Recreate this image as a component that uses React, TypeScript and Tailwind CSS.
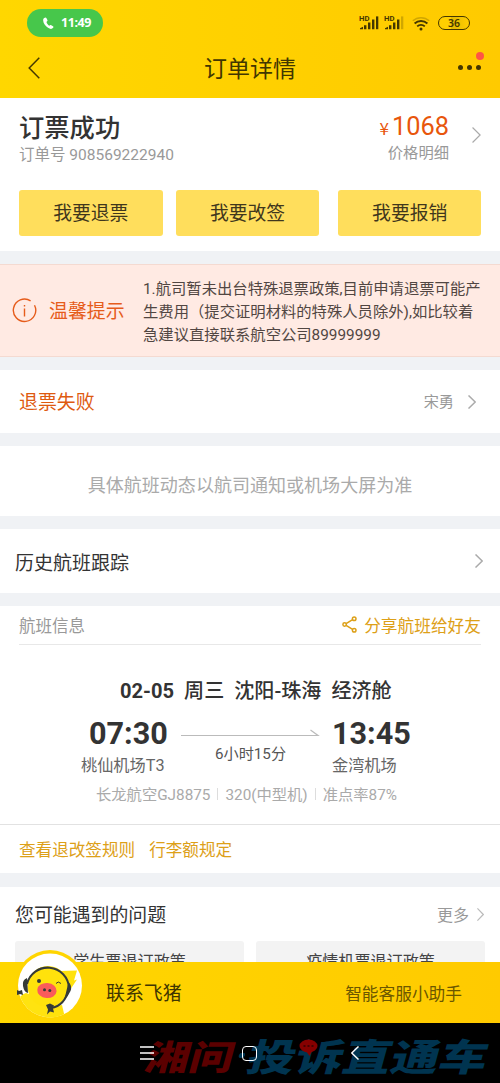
import React from "react";

function Chevron({ className, left = false, width = 1.2 }: { className: string; left?: boolean; width?: number }) {
  return (
    <svg className={className} viewBox="0 0 10 18" fill="none" stroke="currentColor" strokeWidth={width} preserveAspectRatio="none">
      <path d={left ? "M9.4 0.6L1 9l8.4 8.4" : "M0.6 0.6L9 9l-8.4 8.4"} vectorEffect="non-scaling-stroke" />
    </svg>
  );
}

function Signal({ faded = false }: { faded?: boolean }) {
  return (
    <svg className="h-[16px] w-[21px] shrink-0" viewBox="0 0 21 16">
      <text x="0" y="5.6" fontSize="6.8" fontWeight="700" fontFamily="Roboto, sans-serif" textLength="10.5" lengthAdjust="spacingAndGlyphs" fill="#443600">HD</text>
      <path d="M1 14.2v-1l3-1.400v2.400zM5 14.200v-4h2.400v4zM9 14.200V7.600h2.400v6.600zM13 14.200V4.600h2.400v9.600z" fill="#443600" />
      <path d="M17 14.200V1.400h2.300v12.800z" fill="#443600" opacity={faded ? 0.25 : 1} />
    </svg>
  );
}

function StatusBar() {
  return (
    <div className="flex h-[46px] items-center justify-between pl-[27px] pr-[30px]">
      <div className="flex h-[28px] w-[76px] items-center rounded-full bg-[#47c74b] pl-[16px] text-white">
        <svg className="h-[13px] w-[11px]" viewBox="0 0 11 13" fill="currentColor">
          <path d="M1.2 1.1C2.2.3 3 .3 3.500 1.200l.9 1.900c.3.700 0 1.100-.9 1.900.4 1.600 1.300 2.800 2.700 3.700.9-.8 1.400-.9 2-.5l1.800 1.100c.7.500.6 1.100-.1 1.800-1.100 1.200-2.900 1.100-4.900-.3C2.200 8.900.4 6.300.2 3.700.100 2.500.400 1.700 1.200 1.100z" />
        </svg>
        <span className="ml-[7px] font-['Noto_Sans'] text-[12.5px] font-bold leading-none tracking-[-0.4px]">11:49</span>
      </div>
      <div className="flex items-center">
        <Signal />
        <div className="w-[4px]" />
        <Signal faded />
        <svg className="ml-[7px] h-[15px] w-[18px]" viewBox="0 0 18 15" fill="none" stroke="#443600" strokeWidth="1.9">
          <path d="M.8 4.800a12.200 12.200 0 0 1 16.400 0" opacity=".25" strokeWidth="1.500" />
          <path d="M2.600 7.500a9.600 9.600 0 0 1 12.800 0M5.200 10.400a5.800 5.800 0 0 1 7.600 0" />
          <circle cx="9" cy="13" r="1.500" fill="#443600" stroke="none" />
        </svg>
        <div className="ml-[8px] flex h-[14px] w-[32px] items-center justify-center rounded-full border-[1.5px] border-[#443600] bg-linear-to-r from-[#ffcf00] from-40% via-[#e2b800] via-40% to-[#ffcc00] to-95% font-['Noto_Sans'] text-[10.5px] font-semibold leading-none text-[#443600]">36</div>
      </div>
    </div>
  );
}

function Header() {
  return (
    <header className="h-[98px] bg-linear-to-r from-[#ffd700] to-[#ffca00]">
      <StatusBar />
      <div className="flex h-[43px] items-center justify-between pl-[28px] pr-[19px]">
        <Chevron left className="h-[22px] w-[12px] text-[#463900]" width={1.5} />
        <h1 className="ml-[2px] pt-[3px] text-[23px] leading-none text-[#413600]">订单详情</h1>
        <div className="relative flex gap-[4px]">
          <i className="size-[5px] rounded-full bg-[#443600]" />
          <i className="size-[5px] rounded-full bg-[#443600]" />
          <i className="size-[5px] rounded-full bg-[#443600]" />
          <i className="absolute -top-[13px] -right-[3px] size-[8px] rounded-full bg-[#ff5545]" />
        </div>
      </div>
    </header>
  );
}

function OrderSummary() {
  return (
    <section className="h-[153px] bg-white pl-[19px] pr-[19px] pt-[13px]">
      <div className="flex h-[79px]">
        <div className="flex-1">
          <h2 className="pt-px text-[25.3px] font-medium leading-[33px] text-[#333]">订票成功</h2>
          <p className="text-[15.5px] leading-[20px] text-[#999]">订单号 908569222940</p>
        </div>
        <div className="text-right">
          <p className="text-[25.4px] leading-[30px] text-[#e8560c]"><span className="mr-[3px] font-['Noto_Sans_CJK_SC'] text-[17px]">¥</span>1068</p>
          <p className="text-[15.3px] leading-[20px] text-[#999]">价格明细</p>
        </div>
        <Chevron className="ml-[23px] mt-[16px] h-[16px] w-[9px] text-[#aaa]" />
      </div>
      <div className="flex gap-[13px]">
        {["我要退票", "我要改签", "我要报销"].map((label, i) => (
          <button key={label} className={`h-[46px] rounded-[3px] bg-[#ffde5c] pt-[3px] text-[18.8px] leading-none text-[#40361c] ${i === 2 ? "ml-[6px] w-[143px]" : "w-[144px]"}`}>{label}</button>
        ))}
      </div>
    </section>
  );
}

function Notice() {
  return (
    <section className="flex h-[93px] items-center border-y border-[#f4dad1] bg-[#ffeae3] pl-[12px]">
      <svg className="size-[25px] shrink-0 text-[#e65c1b]" viewBox="0 0 25 25" fill="none" stroke="currentColor" strokeWidth="1.4">
        <path d="M18.600 2.900A11.200 11.200 0 1 0 22.500 7.200" />
        <path d="M12.500 10.500v8M12.500 6.900v1.600" />
      </svg>
      <strong className="ml-[12px] w-[76px] shrink-0 pt-[4px] text-[18.9px] font-normal leading-none text-[#e65c1b]">温馨提示</strong>
      <p className="ml-[18px] whitespace-nowrap pt-[3px] text-[15.33px] leading-[23px] text-[#514642]">
        1.航司暂未出台特殊退票政策,目前申请退票可能产<br />
        生费用（提交证明材料的特殊人员除外),如比较着<br />
        急建议直接联系航空公司89999999
      </p>
    </section>
  );
}

function FlightInfo() {
  return (
    <section className="h-[267px] bg-white">
      <div className="mx-[19px] flex h-[39px] items-center justify-between border-b border-[#e8e8e8]">
        <span className="pt-[4px] text-[16.5px] leading-none text-[#999]">航班信息</span>
        <span className="flex items-center gap-[7px] text-[16.7px] leading-none text-[#dda018]">
          <svg className="h-[17px] w-[15px]" viewBox="0 0 15 17" fill="none" stroke="currentColor" strokeWidth="1.5">
            <circle cx="2.600" cy="8.500" r="1.700" />
            <circle cx="12.200" cy="2.700" r="1.800" />
            <circle cx="12.200" cy="14.300" r="1.800" />
            <path d="M4.100 7.600l6.500-4M4.100 9.400l6.500 4" />
          </svg>
          <span className="pt-[4px]">分享航班给好友</span>
        </span>
      </div>
      <h3 className="ml-[120px] mt-[34px] whitespace-pre text-[20.1px] font-medium leading-[24px] text-[#333]"><b className="font-bold">02-05</b>{"  周三  沈阳-珠海  经济舱"}</h3>
      <div className="flex h-[72px] pt-[14px]">
        <div className="w-[181px]">
          <p className="pl-[89px] text-[30.6px] font-bold leading-[34px] text-[#333]">07:30</p>
          <p className="pl-[81px] pt-[3px] text-[16.2px] leading-[24px] text-[#666]">桃仙机场T3</p>
        </div>
        <div className="w-[139px]">
          <svg className="mt-[11px] h-[9px] w-[139px]" viewBox="0 0 139 9" fill="none" stroke="#bbb">
            <path d="M0 7.500h137L129.500 2" strokeWidth="1.200" />
          </svg>
          <p className="mt-[7px] text-center text-[15.2px] leading-[20px] text-[#555]">6小时15分</p>
        </div>
        <div className="pl-[12px]">
          <p className="text-[30.6px] font-bold leading-[34px] text-[#333]">13:45</p>
          <p className="pt-[3px] text-[16.2px] leading-[24px] text-[#666]">金湾机场</p>
        </div>
      </div>
      <div className="ml-[96px] mt-[9px] flex h-[20px] items-center text-[15.3px] leading-none text-[#aaa]">
        <span className="pt-[3px]">长龙航空GJ8875</span>
        <i className="mx-[7px] h-[12px] w-px bg-[#ddd]" />
        <span className="pt-[3px]">320(中型机)</span>
        <i className="mx-[7px] h-[12px] w-px bg-[#ddd]" />
        <span className="pt-[3px]">准点率87%</span>
      </div>
      <div className="mt-[20px] flex h-[49px] items-center gap-[14px] border-t border-[#e2e2e2] pl-[19px] pt-[4px] text-[16.6px] leading-none text-[#dda018]">
        <span>查看退改签规则</span>
        <span>行李额规定</span>
      </div>
    </section>
  );
}

function Pig() {
  return (
    <svg className="absolute -top-[12px] left-[14px] h-[70px] w-[70px]" viewBox="0 0 70 70">
      <defs>
        <clipPath id="face"><circle cx="36" cy="35.500" r="32" /></clipPath>
      </defs>
      <circle cx="36" cy="34.500" r="34.500" fill="#ffd500" />
      <circle cx="36" cy="35.500" r="32" fill="#fff" />
      <g clipPath="url(#face)">
        <path d="M46 21l17-.500-3 10 3-1-10 15z" fill="#ffe20c" />
        <path d="M12 43Q2 46 4 60l18 12h26l-6-19z" fill="#ffe310" />
        <circle cx="34" cy="36.500" r="20.500" fill="#ffe20c" />
        <path d="M34 58l14-3 4 17H34z" fill="#ffe20c" />
      </g>
      <path d="M13 34A21.300 21.300 0 0 1 55 38Q51 56 37 58" fill="none" stroke="#353b38" strokeWidth="2" />
      <path d="M13 28q-5 2-4 8t5 7zM54.500 32q4 4 2 9t-6 8z" fill="#353b38" />
      <path d="M3 40l2 1 3-1 1 5-3-1-3 1zM32 55l4-1.500 4 2-1 3 1 4-4-1-3 3 1-5z" fill="#353b38" />
      <circle cx="25" cy="31" r="2" fill="#353b38" />
      <path d="M42 33.500q2-3 5 0" fill="none" stroke="#353b38" strokeWidth="1" />
      <ellipse cx="33" cy="40.500" rx="9.700" ry="7.500" fill="#fa5b5b" transform="rotate(5 33 40)" />
      <circle cx="30.500" cy="39.800" r="1.500" fill="#353b38" />
      <circle cx="35.800" cy="40.500" r="1.500" fill="#353b38" />
    </svg>
  );
}

export default function App() {
  return (
    <div className="flex h-[1083px] w-[500px] flex-col overflow-hidden bg-[#f0f2f5] font-['Roboto','Noto_Sans_CJK_SC',sans-serif]">
      <Header />
      <OrderSummary />
      <div className="h-[13px] shrink-0" />
      <Notice />
      <section className="mt-[13px] flex h-[63px] items-center bg-white pl-[19px] pr-[24px] leading-none">
        <span className="flex-1 pt-[4px] text-[18.9px] text-[#de5a10]">退票失败</span>
        <span className="pt-[3px] text-[15.2px] text-[#999]">宋勇</span>
        <Chevron className="ml-[14px] h-[14px] w-[8px] text-[#aaa]" width={1.5} />
      </section>
      <section className="mt-[13px] flex h-[70px] items-center justify-center bg-white pt-[11px] text-[18.05px] leading-none text-[#aaa]">具体航班动态以航司通知或机场大屏为准</section>
      <section className="mt-[13px] flex h-[64px] items-center justify-between bg-white pl-[15px] pr-[17px] text-[19px] leading-none text-[#333]">
        <span className="pt-[4px]">历史航班跟踪</span>
        <Chevron className="h-[14px] w-[8px] text-[#aaa]" width={1.5} />
      </section>
      <div className="h-[13px] shrink-0" />
      <FlightInfo />
      <section className="mt-[14px] h-[75px] overflow-hidden bg-white px-[15px]">
        <div className="flex h-[54px] items-center leading-none">
          <span className="flex-1 pt-[4px] text-[18.9px] text-[#333]">您可能遇到的问题</span>
          <span className="pt-[3px] text-[16px] text-[#999]">更多</span>
          <Chevron className="ml-[8px] mr-px h-[13px] w-[7px] text-[#bbb]" />
        </div>
        <div className="grid grid-cols-2 gap-[12px] text-center text-[16.1px] leading-[41px] text-[#444]">
          <div className="h-[42px] rounded-[3px] bg-[#f3f3f3]">学生票退订政策</div>
          <div className="h-[42px] rounded-[3px] bg-[#f3f3f3]">疫情机票退订政策</div>
        </div>
      </section>
      <footer className="relative flex h-[61px] items-center justify-between bg-linear-to-r from-[#ffd700] to-[#ffca00] pl-[106px] pr-[38px] leading-none">
        <Pig />
        <span className="pt-[3px] text-[18.9px] text-[#403600]">联系飞猪</span>
        <span className="pt-[5px] text-[16.7px] text-[#6b5700]">智能客服小助手</span>
      </footer>
      <nav className="relative h-[60px] shrink-0 overflow-hidden bg-black">
        <div className="absolute left-[147px] top-[2px] flex h-[60px] -skew-x-12 scale-y-[0.78] items-center whitespace-nowrap font-['Noto_Sans_CJK_SC'] font-black leading-[60px]">
          <span className="text-[44px] text-[#5b0000]">湘问</span>
          <i className="mx-[4px] h-[7px] w-[6px] rounded-full bg-[#003450]" />
          <span className="text-[48px] text-[#003450]">投诉直通车</span>
        </div>
        <svg className="absolute left-[299px] top-[16px] h-[17px] w-[19px]" viewBox="0 0 19 17">
          <ellipse cx="9.500" cy="7" rx="9" ry="6.500" fill="#850000" />
          <path d="M7 12l6 0-2.500 5z" fill="#850000" />
          <path d="M4.500 7h2M8.500 7h2M12.500 7h2" stroke="#320000" strokeWidth="1.500" />
        </svg>
        <div className="relative flex h-full items-center pl-[140px]">
          <svg className="h-[14px] w-[14px]" viewBox="0 0 14 14" stroke="#fff" strokeWidth="1.300">
            <path d="M0 1h14M0 7h14M0 13h14" />
          </svg>
          <i className="ml-[88px] h-[15px] w-[15px] rounded-[4px] border-[1.5px] border-white" />
          <Chevron left className="ml-[94px] h-[14px] w-[8px] text-white" width={1.4} />
        </div>
      </nav>
    </div>
  );
}
